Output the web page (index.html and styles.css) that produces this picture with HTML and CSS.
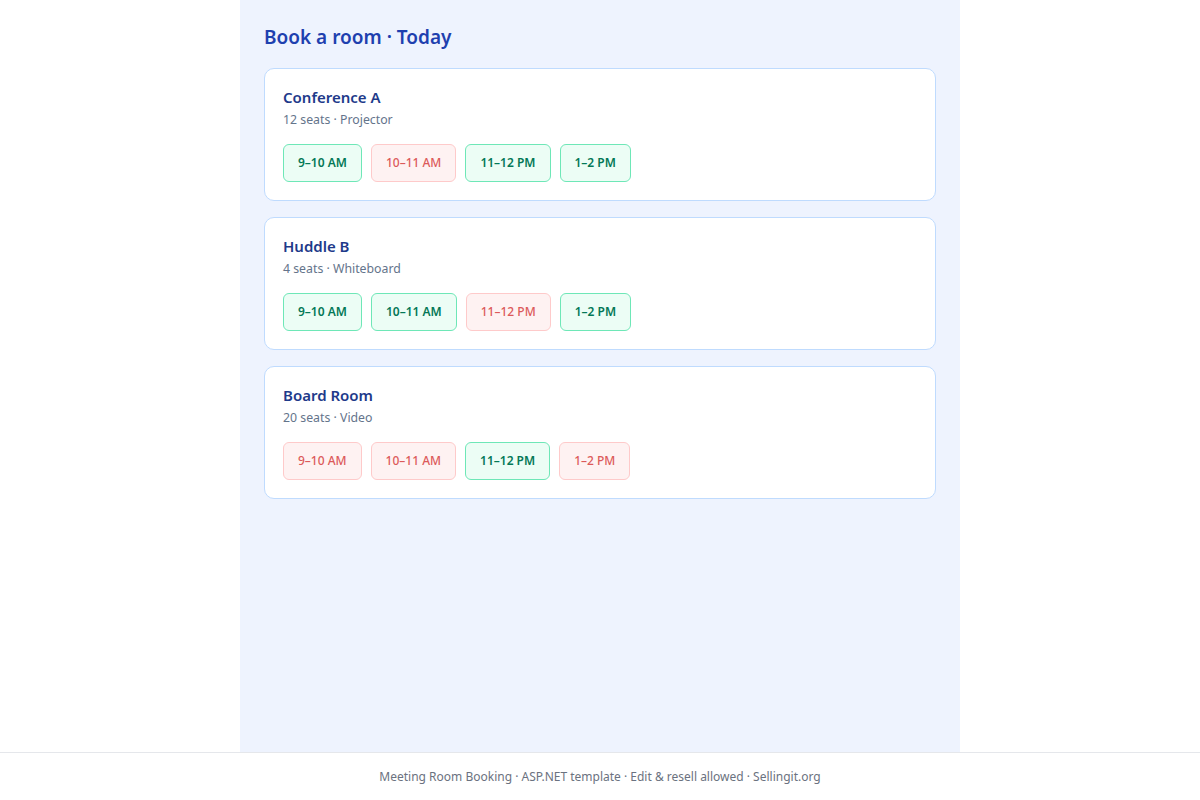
FILE: index.html
```html
<!DOCTYPE html>
<html lang="en">
<head>
<meta charset="utf-8">
<title>Meeting Room Booking</title>
<link rel="stylesheet" href="styles.css">
</head>
<body>
<main class="page">
  <h1 class="page-title">Book a room &middot; Today</h1>

  <section class="room">
    <h2 class="room-name">Conference A</h2>
    <p class="room-meta">12 seats &middot; Projector</p>
    <div class="slots">
      <button class="slot free">9&ndash;10 AM</button>
      <button class="slot taken">10&ndash;11 AM</button>
      <button class="slot free">11&ndash;12 PM</button>
      <button class="slot free">1&ndash;2 PM</button>
    </div>
  </section>

  <section class="room">
    <h2 class="room-name">Huddle B</h2>
    <p class="room-meta">4 seats &middot; Whiteboard</p>
    <div class="slots">
      <button class="slot free">9&ndash;10 AM</button>
      <button class="slot free">10&ndash;11 AM</button>
      <button class="slot taken">11&ndash;12 PM</button>
      <button class="slot free">1&ndash;2 PM</button>
    </div>
  </section>

  <section class="room">
    <h2 class="room-name">Board Room</h2>
    <p class="room-meta">20 seats &middot; Video</p>
    <div class="slots">
      <button class="slot taken">9&ndash;10 AM</button>
      <button class="slot taken">10&ndash;11 AM</button>
      <button class="slot free">11&ndash;12 PM</button>
      <button class="slot taken">1&ndash;2 PM</button>
    </div>
  </section>
</main>

<footer class="site-footer">Meeting Room Booking &middot; ASP.NET template &middot; Edit &amp; resell allowed &middot; Sellingit.org</footer>
</body>
</html>
```

FILE: styles.css
```css
html, body { margin: 0; padding: 0; }
body {
  min-height: 100vh;
  display: flex;
  flex-direction: column;
  align-items: center;
  background: #fff;
  font-family: "Noto Sans", "Open Sans", sans-serif;
  color: #1e293b;
}

.page {
  flex: 1;
  width: 720px;
  box-sizing: border-box;
  padding: 25px 24px 24px;
  background: #eef3fe;
  display: flex;
  flex-direction: column;
  gap: 16px;
}

.page-title {
  margin: 0 0 2px;
  font-size: 19px;
  line-height: 25px;
  font-weight: 600;
  color: #1e40af;
}

.room {
  background: #fff;
  border: 1px solid #bfdbfe;
  border-radius: 10px;
  padding: 18px;
}
.room-name {
  margin: 0;
  font-size: 15px;
  line-height: 20px;
  font-weight: 600;
  color: #1e3a8a;
}
.room-meta {
  margin: 4px 0 0;
  font-size: 12.3px;
  line-height: 18px;
  color: #64748b;
}

.slots {
  display: flex;
  gap: 9px;
  margin-top: 15px;
}
.slot {
  font: inherit;
  font-size: 12px;
  line-height: 16px;
  font-weight: 600;
  padding: 10px 14px;
  border-radius: 6px;
  border: 1px solid;
  cursor: pointer;
}
.slot.free  { background: #ecfdf5; border-color: #6ee7b7; color: #047857; }
.slot.taken { background: #fef2f2; border-color: #fecaca; color: #dc5a5a; font-weight: 500; cursor: not-allowed; }

.site-footer {
  align-self: stretch;
  border-top: 1px solid #e5e7eb;
  padding: 16px 0;
  text-align: center;
  font-size: 12px;
  line-height: 15px;
  color: #6b7280;
}
```
